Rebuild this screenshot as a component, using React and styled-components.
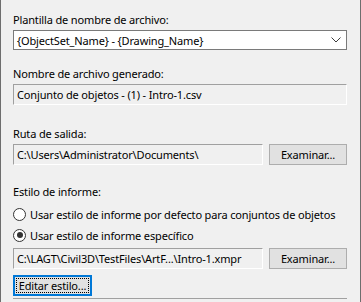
import React from "react";
import styled, { createGlobalStyle } from "styled-components";

const GlobalStyle = createGlobalStyle`
  html, body {
    margin: 0;
    padding: 0;
    background: #f0f0f0;
  }
  body {
    font-family: "Noto Sans", "Liberation Sans", sans-serif;
    font-size: 11px;
    letter-spacing: -0.15px;
    color: #000;
  }
`;

export default function App() {
  return (
    <>
      <GlobalStyle />
      <Panel>
        <Label style={{ marginTop: 12 }}>Plantilla de nombre de archivo:</Label>
        <Combo>
          <span>{"{ObjectSet_Name} - {Drawing_Name}"}</span>
          <svg width="10" height="6" viewBox="0 0 10 6">
            <path d="M0.5 0.5 L5 5 L9.5 0.5" fill="none" stroke="#3c3c3c" strokeWidth="1" />
          </svg>
        </Combo>

        <Label $gap={16}>Nombre de archivo generado:</Label>
        <ReadOnly>Conjunto de objetos - (1) - Intro-1.csv</ReadOnly>

        <Label $gap={21}>Ruta de salida:</Label>
        <Row>
          <PathField>C:\Users\Administrator\Documents\</PathField>
          <Button>Examinar...</Button>
        </Row>

        <Label $gap={19}>Estilo de informe:</Label>
        <Radio style={{ marginTop: 4 }}>
          <Dot />
          Usar estilo de informe por defecto para conjuntos de objetos
        </Radio>
        <Radio style={{ marginTop: 5 }}>
          <Dot $checked />
          Usar estilo de informe específico
        </Radio>
        <Row style={{ marginTop: 5 }}>
          <PathField>C:\LAGT\Civil3D\TestFiles\ArtF...\Intro-1.xmpr</PathField>
          <Button>Examinar...</Button>
        </Row>
        <FocusButton>
          <span>Editar estilo...</span>
        </FocusButton>
        <BottomRule />
      </Panel>
    </>
  );
}

const Panel = styled.div`
  box-sizing: border-box;
  width: 361px;
  height: 302px;
  border-left: 1px solid #6e6e6e;
  border-right: 1px solid #6e6e6e;
  padding: 0 13px 0 12px;
  display: flex;
  flex-direction: column;
  overflow: hidden;
`;

const Label = styled.div`
  height: 15px;
  line-height: 15px;
  margin-top: ${(p) => p.$gap || 0}px;
  margin-bottom: 3px;
  white-space: nowrap;
`;

const Combo = styled.div`
  box-sizing: border-box;
  height: 20px;
  border: 1px solid #7a7a7a;
  background: #fff;
  display: flex;
  align-items: center;
  justify-content: space-between;
  padding: 0 5px 0 3px;
`;

const ReadOnly = styled.div`
  box-sizing: border-box;
  height: 21px;
  border: 1px solid #fff;
  border-top-color: #a0a0a0;
  border-left-color: #a0a0a0;
  background: #f0f0f0;
  display: flex;
  align-items: center;
  padding-left: 3px;
  white-space: nowrap;
`;

const Row = styled.div`
  display: flex;
  gap: 6px;
  height: 21px;
`;

const PathField = styled(ReadOnly)`
  width: 250px;
  overflow: hidden;
`;

const Button = styled.div`
  box-sizing: border-box;
  flex: 1;
  height: 21px;
  border: 1px solid #adadad;
  background: #e1e1e1;
  display: flex;
  align-items: center;
  justify-content: center;
`;

const Radio = styled.div`
  display: flex;
  align-items: center;
  gap: 4px;
  height: 16px;
  white-space: nowrap;
`;

const Dot = styled.span`
  box-sizing: border-box;
  width: 13px;
  height: 13px;
  border-radius: 50%;
  border: 1px solid #333;
  background: #fff;
  position: relative;
  flex-shrink: 0;

  &::after {
    content: "";
    display: ${(p) => (p.$checked ? "block" : "none")};
    position: absolute;
    left: 2.5px;
    top: 2.5px;
    width: 6px;
    height: 6px;
    border-radius: 50%;
    background: #333;
  }
`;

const FocusButton = styled.div`
  box-sizing: border-box;
  width: 79px;
  height: 21px;
  margin-top: 6px;
  border: 2px solid #0078d7;
  background: #e1e1e1;
  padding: 1px;

  span {
    box-sizing: border-box;
    display: flex;
    align-items: center;
    justify-content: center;
    height: 100%;
    border: 1px dotted #000;
    white-space: nowrap;
  }
`;

const BottomRule = styled.div`
  margin-top: 2px;
  height: 1px;
  background: #a0a0a0;
`;
